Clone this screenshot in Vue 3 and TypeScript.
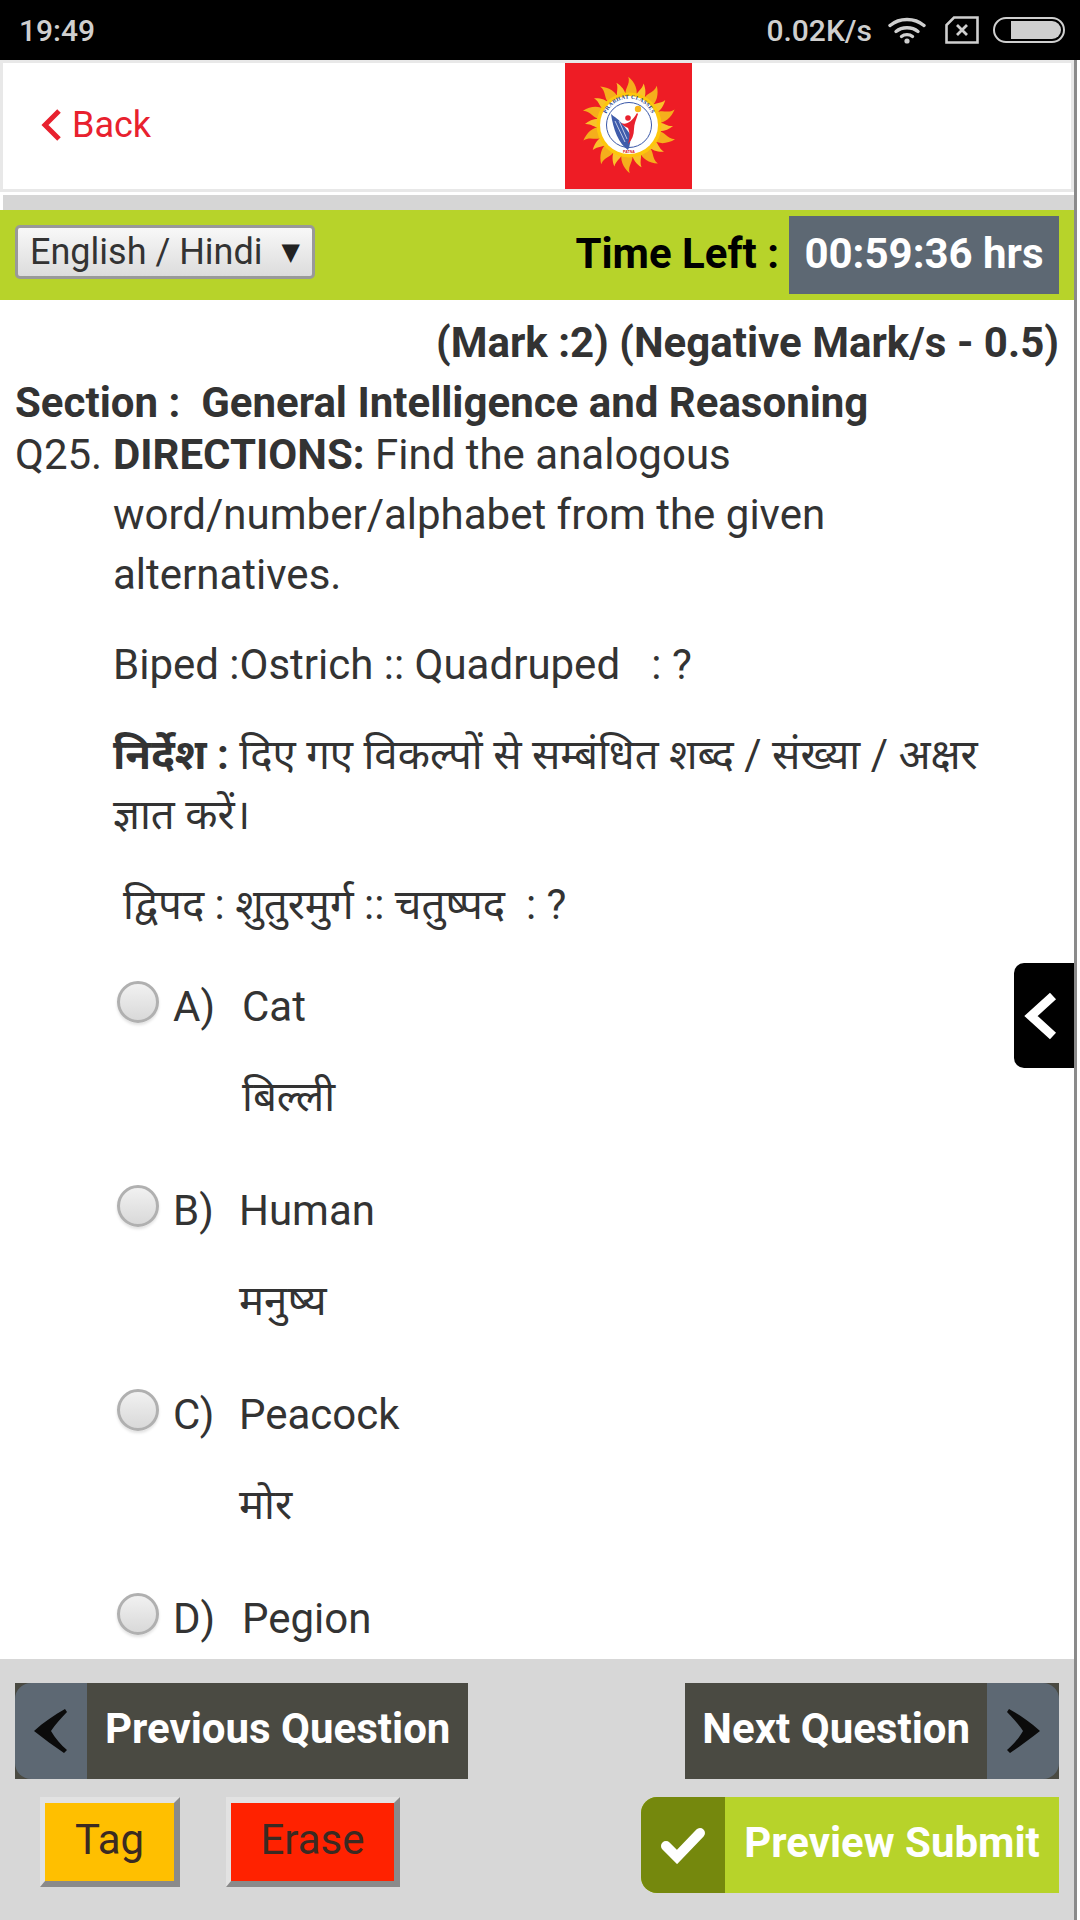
<script setup lang="ts">
interface Opt { label: string; en: string; hi: string; wide: boolean }
const options: Opt[] = [
  { label: 'A)', en: 'Cat', hi: 'बिल्ली', wide: true },
  { label: 'B)', en: 'Human', hi: 'मनुष्य', wide: false },
  { label: 'C)', en: 'Peacock', hi: 'मोर', wide: false },
  { label: 'D)', en: 'Pegion', hi: '', wide: true },
]
const flames = Array.from({ length: 20 }, (_, i) => ({ angle: i * 18 + 4, long: i % 2 === 0 }))
</script>

<template>
  <div class="screen">
    <div class="status">
      <span class="clock">19:49</span>
      <div class="status-right">
        <span class="speed">0.02K/s</span>
        <svg class="wifi" width="38" height="28" viewBox="0 0 38 28" fill="none" stroke="#cfcfcf" stroke-width="3.4" stroke-linecap="round">
          <path d="M2 9.5C11.5 1.5 26.5 1.5 36 9.5" />
          <path d="M8 15.5C14 10.5 24 10.5 30 15.5" />
          <path d="M13.5 20.5C16.5 18 21.5 18 24.5 20.5" />
          <circle cx="19" cy="25" r="2.6" fill="#cfcfcf" stroke="none" />
        </svg>
        <svg class="sim" width="34" height="28" viewBox="0 0 34 28" fill="none" stroke="#cfcfcf" stroke-width="2.6">
          <path d="M9 1.5H32.5V26.5H1.5V9Z" />
          <path d="M12 9L22 19M22 9L12 19" stroke-width="2.8" />
        </svg>
        <svg class="battery" width="72" height="28" viewBox="0 0 72 28">
          <rect x="1" y="2" width="70" height="24" rx="12" fill="none" stroke="#cfcfcf" stroke-width="2" />
          <path d="M18 5H59A9 9 0 0 1 59 23H18Z" fill="#cfcfcf" />
        </svg>
      </div>
    </div>

    <div class="page">
      <header class="head">
        <a class="back">
          <svg width="20" height="32" viewBox="0 0 20 32" fill="none" stroke="#e8212e" stroke-width="5">
            <path d="M18 2L4 16L18 30" />
          </svg>
          <span>Back</span>
        </a>
        <div class="logo">
          <svg width="127" height="126" viewBox="0 0 127 126">
            <rect width="127" height="126" fill="#ee1c25" />
            <g transform="translate(1 0)">
              <g v-for="f in flames" :key="f.angle" :transform="`rotate(${f.angle} 63 62)`">
                <path v-if="f.long" d="M58 34C55 26 62 22 59 14C66 19 70 27 68 34Z" fill="#f5ae1c" />
                <path v-else d="M59 34C57 28 62 25 61 18C65 22 68 28 67 34Z" fill="#f9c22a" />
              </g>
              <circle cx="63" cy="62" r="32.5" fill="#fdc70c" />
              <circle cx="63" cy="62" r="29" fill="#fff" />
              <path id="logo-arc" d="M38.5 60A24.5 24.5 0 0 1 87.5 60" fill="none" />
              <text class="logo-name">
                <textPath href="#logo-arc" startOffset="50%" text-anchor="middle">PRABHAT CLASSES</textPath>
              </text>
              <circle cx="63" cy="62" r="22.5" fill="#fff" stroke="#3a58a8" stroke-width="1" />
              <path d="M45 51C47 53 54 57 58 63L64 71C65 77 64 83 62 87C53 81 47 66 45 51Z" fill="#3f5cab" />
              <path d="M49 58L59 79M53 58L61 76" stroke="#dfe6f6" stroke-width=".8" fill="none" />
              <circle cx="62" cy="55" r="2.8" fill="#e8212e" />
              <path d="M55 60C60 62 65 60 71 50L72 51C70 57 68 61 68 66C68 72 66 77 62 81C64 74 64 70 62 65C59 64 57 62 55 60Z" fill="#e8212e" />
              <circle cx="72" cy="46" r="3.2" fill="#f7b71d" />
              <text class="logo-town" x="63" y="89.5" text-anchor="middle">PATNA</text>
            </g>
          </svg>
        </div>
      </header>
      <div class="rule"></div>
      <div class="toolbar">
        <div class="lang">
          <span>English / Hindi</span>
          <span class="caret">▼</span>
        </div>
        <div class="time">
          <span class="time-label">Time Left :</span>
          <span class="time-value">00:59:36 hrs</span>
        </div>
      </div>

      <main class="content">
        <div class="marks">(Mark :2) (Negative Mark/s - 0.5)</div>
        <div class="section">Section :&nbsp; General Intelligence and Reasoning</div>
        <div class="question">
          <div class="qno">Q25.</div>
          <div class="qbody">
            <p><b>DIRECTIONS:</b> Find the analogous word/number/alphabet from the given alternatives.</p>
            <p>Biped :Ostrich :: Quadruped &nbsp; : ?</p>
            <p><b>निर्देश :</b> दिए गए विकल्पों से सम्बंधित शब्द / संख्या / अक्षर ज्ञात करें।</p>
            <p class="indent">द्विपद : शुतुरमुर्ग :: चतुष्पद &nbsp;: ?</p>
            <div class="options">
              <div v-for="o in options" :key="o.label" class="option">
                <span class="radio"></span>
                <span class="opt-label">{{ o.label }}</span>
                <div class="opt-text" :class="{ wide: o.wide }">
                  <div>{{ o.en }}</div>
                  <div v-if="o.hi" class="opt-hi">{{ o.hi }}</div>
                </div>
              </div>
            </div>
          </div>
        </div>
        <div class="side-tab">
          <svg width="36" height="50" viewBox="0 0 36 50" fill="none" stroke="#fff" stroke-width="9">
            <path d="M30 5L8 25L30 45" />
          </svg>
        </div>
      </main>

      <footer class="foot">
        <div class="nav-row">
          <div class="nav">
            <span class="nav-arrow left">
              <svg class="soft" width="38" height="46" viewBox="0 0 38 46"><path d="M2 23C12 14 22 7 33 1L35 4C29 10 23 17 19 23C23 30 29 37 35 42L32 45C22 38 12 31 2 23Z" fill="#0b0b0b" /></svg>
            </span>
            <span class="nav-text">Previous Question</span>
          </div>
          <div class="nav next">
            <span class="nav-text">Next Question</span>
            <span class="nav-arrow right">
              <svg class="soft" width="38" height="46" viewBox="0 0 38 46"><path d="M36 23C26 14 16 7 5 1L3 4C9 10 15 17 19 23C15 30 9 37 3 42L6 45C16 38 26 31 36 23Z" fill="#0b0b0b" /></svg>
            </span>
          </div>
        </div>
        <div class="action-row">
          <div class="bevels">
            <button class="bevel tag"><span>Tag</span></button>
            <button class="bevel erase"><span>Erase</span></button>
          </div>
          <div class="submit">
            <span class="submit-icon">
              <svg class="soft" width="46" height="38" viewBox="0 0 46 38" fill="none" stroke="#fff" stroke-width="10" stroke-linecap="round">
                <path d="M6 20L17 31L40 7" />
              </svg>
            </span>
            <span class="submit-text">Preview Submit</span>
          </div>
        </div>
      </footer>
    </div>
  </div>
</template>

<style>
html, body { margin: 0; background: #fff; }
</style>

<style scoped>
* { box-sizing: border-box; }
.screen {
  width: 1080px; height: 1920px; overflow: hidden; display: flex; flex-direction: column;
  font-family: Roboto, "Noto Sans", "Noto Sans Devanagari", sans-serif; color: #333; background: #fff;
}
.status {
  height: 60px; flex: none; background: #000; color: #cfcfcf; display: flex; align-items: center;
  justify-content: space-between; padding: 0 15px 0 19px; font-size: 30px; font-weight: 500;
}
.status-right { display: flex; align-items: center; }
.speed { margin-right: 16px; }
.sim { margin-left: 19px; }
.battery { margin-left: 14px; }

.page {
  flex: 1; min-height: 0; display: flex; flex-direction: column;
  border-right: 3px solid #8a8a8a; margin-right: 3px;
}
.head {
  height: 132px; flex: none; border: 3px solid #e8e8e8; background: #fff;
  display: flex; align-items: center; position: relative;
}
.back {
  display: flex; align-items: center; gap: 11px; color: #e8212e; font-size: 36px; margin-left: 38px; margin-top: -2px;
}
.logo { position: absolute; left: 562px; top: 0; width: 127px; height: 126px; }
.logo svg { display: block; }
.logo-name { font-family: "Liberation Serif", serif; font-size: 5.6px; font-weight: 700; fill: #24408c; letter-spacing: .3px; }
.logo-town { font-family: "Liberation Sans", sans-serif; font-size: 3.6px; font-weight: 700; fill: #d8202a; }
.rule { height: 18px; flex: none; border-top: 3px solid #fff; background: #d6d6d6; margin-left: 3px; }
.toolbar {
  height: 90px; flex: none; background: #b7d32a; display: flex; align-items: center;
  justify-content: space-between; padding: 0 15px;
}
.lang {
  width: 300px; height: 54px; border: 3px solid #999; border-radius: 5px; margin-bottom: 7px;
  background: linear-gradient(#f8f8f8, #dcdcdc); display: flex; align-items: center;
  padding: 0 12px 0 12px; justify-content: space-between; font-size: 36px; color: #333;
}
.caret { font-size: 24px; color: #222; font-family: "DejaVu Sans", sans-serif; }
.time { display: flex; align-items: center; gap: 10px; }
.time-label { font-size: 42px; font-weight: 700; color: #000; padding-bottom: 4px; }
.time-value {
  width: 270px; height: 78px; background: #5d6873; color: #fff; font-size: 42px; font-weight: 700;
  display: flex; align-items: center; justify-content: center; padding-bottom: 4px;
}

.content { flex: 1; min-height: 0; overflow: hidden; position: relative; background: #fff; }
.marks { height: 48px; margin-top: 19px; padding-right: 15px; text-align: right; font-size: 42px; font-weight: 700; line-height: 48px; }
.section { height: 45px; margin-top: 13px; padding-left: 15px; font-size: 42px; font-weight: 700; line-height: 45px; }
.question { display: flex; font-size: 42px; line-height: 60px; padding-left: 15px; }
.qno { width: 98px; flex: none; }
.qbody { flex: 1; padding-right: 60px; min-width: 0; }
.qbody p { margin: 0 0 30px; }
.qbody .indent { padding-left: 10px; margin-bottom: 42px; }
.option { display: flex; align-items: flex-start; margin-bottom: 54px; }
.radio {
  width: 42px; height: 42px; border-radius: 50%; border: 3px solid #b0b0b0; flex: none; margin: 4px 14px 0 4px;
  background: linear-gradient(#f1f1f1, #d9d9d9); box-shadow: 0 2px 3px rgba(0,0,0,.12);
}
.opt-label { width: 66px; flex: none; }
.opt-text.wide { margin-left: 3px; }
.opt-hi { margin-top: 30px; }
.side-tab {
  position: absolute; right: 0; top: 663px; width: 60px; height: 105px; background: #000;
  border-radius: 10px 0 0 10px; display: flex; align-items: center; justify-content: center; padding-right: 6px;
}

.foot {
  height: 261px; flex: none; background: #d7d7d7; padding: 24px 15px 0; display: flex; flex-direction: column; gap: 18px;
}
.nav-row, .action-row { display: flex; justify-content: space-between; }
.nav { height: 96px; display: flex; color: #fff; font-size: 42px; font-weight: 700; background: #4a4a42; }
.nav-text { display: flex; align-items: center; padding: 0 18px 6px; }
.next .nav-text { padding: 0 17px 6px; }
.nav-arrow { width: 72px; background: #5d6873; display: flex; align-items: center; justify-content: center; }
.nav-arrow.left { border-radius: 16px 0 0 16px; }
.nav-arrow.right { border-radius: 0 16px 16px 0; }
.soft { filter: blur(.7px); }
.bevels { display: flex; gap: 46px; padding-left: 25px; }
.bevel {
  height: 90px; padding: 0 0 6px; font-family: inherit; font-size: 42px; color: #3a2a22; border-style: solid;
  border-width: 6px 6px 6px 5px; border-color: #e2e2e2 #8a8a8a #8a8a8a #e2e2e2;
}
.tag { width: 140px; background: #ffbf00; }
.erase { width: 174px; background: #ff2200; }
.submit { width: 418px; height: 96px; display: flex; background: #b7d32a; border-radius: 16px 0 0 16px; overflow: hidden; }
.submit-icon { width: 84px; background: #75880d; display: flex; align-items: center; justify-content: center; }
.submit-text { flex: 1; display: flex; align-items: center; justify-content: center; color: #fff; font-size: 42px; font-weight: 700; padding-bottom: 6px; }
</style>
